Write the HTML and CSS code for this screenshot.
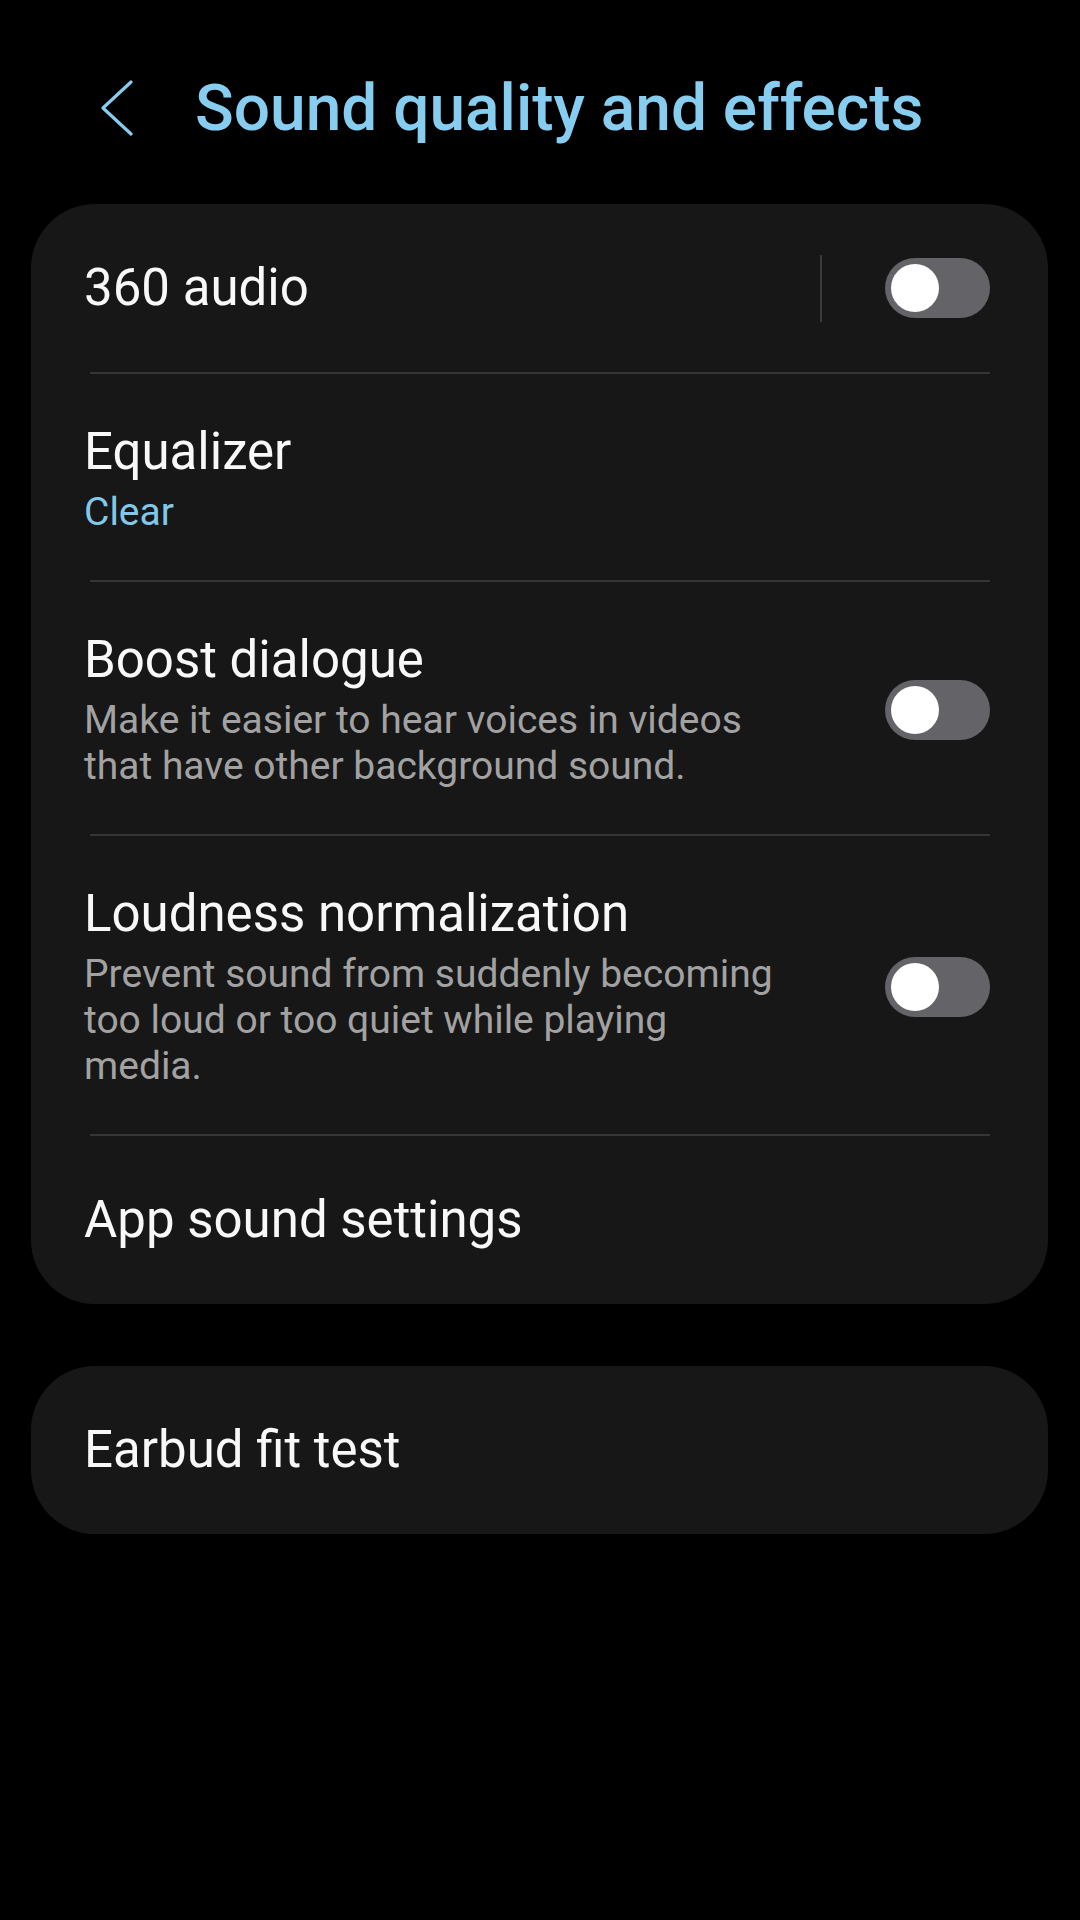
FILE: index.html
```html
<!DOCTYPE html>
<html>
  <head>
    <meta charset="UTF-8">
    <title>Sound quality and effects</title>
    <link rel="stylesheet" href="styles.css">
  </head>
  <body>
    <header class="topbar">
      <button class="back" aria-label="Back">
        <svg width="34" height="56" viewBox="0 0 34 56">
          <path d="M31 2 L3 28 L31 54" fill="none" stroke="#86cdef" stroke-width="3.2" stroke-linecap="round" stroke-linejoin="round"/>
        </svg>
      </button>
      <h1 class="page-title">Sound quality and effects</h1>
    </header>

    <section class="card">
      <div class="row single">
        <div class="row-text">
          <div class="row-title">360 audio</div>
        </div>
        <span class="vsep"></span>
        <span class="switch"><span class="knob"></span></span>
      </div>
      <div class="divider"></div>

      <div class="row">
        <div class="row-text">
          <div class="row-title">Equalizer</div>
          <div class="row-sub accent">Clear</div>
        </div>
      </div>
      <div class="divider"></div>

      <div class="row">
        <div class="row-text">
          <div class="row-title">Boost dialogue</div>
          <div class="row-sub">Make it easier to hear voices in videos that have other background sound.</div>
        </div>
        <span class="switch"><span class="knob"></span></span>
      </div>
      <div class="divider"></div>

      <div class="row">
        <div class="row-text">
          <div class="row-title">Loudness normalization</div>
          <div class="row-sub">Prevent sound from suddenly becoming too loud or too quiet while playing media.</div>
        </div>
        <span class="switch"><span class="knob"></span></span>
      </div>
      <div class="divider"></div>

      <div class="row single">
        <div class="row-text">
          <div class="row-title">App sound settings</div>
        </div>
      </div>
    </section>

    <section class="card">
      <div class="row single">
        <div class="row-text">
          <div class="row-title">Earbud fit test</div>
        </div>
      </div>
    </section>
  </body>
</html>
```

FILE: styles.css
```css
body {
  margin: 0;
  background-color: #000;
  font-family: Roboto, "Noto Sans", sans-serif;
  color: #f8f8f8;
}

.topbar {
  display: flex;
  align-items: center;
  height: 180px;
  padding: 36px 0 0 100px;
  box-sizing: border-box;
}

.back {
  display: flex;
  padding: 0;
  background: none;
  border: none;
  cursor: pointer;
}

.page-title {
  margin: 0 0 0 61px;
  font-size: 64px;
  font-weight: 500;
  color: #86cdef;
  white-space: nowrap;
}

.card {
  margin: 24px 32px 0 31px;
  background-color: #171717;
  border-radius: 64px;
}

.card + .card {
  margin-top: 62px;
}

.row {
  display: flex;
  align-items: center;
  padding: 48px 58px 45px 53px;
}

.row.single {
  height: 168px;
  padding-top: 0;
  padding-bottom: 0;
  box-sizing: border-box;
}

.row-text {
  flex: 1;
  max-width: 700px;
}

.row-title {
  font-size: 51px;
  line-height: 60px;
}

.row-sub {
  margin-top: 7px;
  font-size: 39px;
  line-height: 46px;
  color: #a2a2a2;
}

.row-sub.accent {
  color: #82c8ea;
}

.vsep {
  width: 2px;
  height: 67px;
  margin-left: auto;
  margin-right: 63px;
  background-color: #3a3a3a;
}

.switch {
  display: flex;
  align-items: center;
  width: 105px;
  height: 60px;
  margin-left: auto;
  padding-left: 6px;
  box-sizing: border-box;
  border-radius: 30px;
  background-color: #646468;
  flex-shrink: 0;
}

.vsep + .switch {
  margin-left: 0;
}

.knob {
  width: 48px;
  height: 48px;
  border-radius: 50%;
  background-color: #fff;
}

.divider {
  height: 2px;
  margin: 0 58px 0 59px;
  background-color: #353535;
}
```
